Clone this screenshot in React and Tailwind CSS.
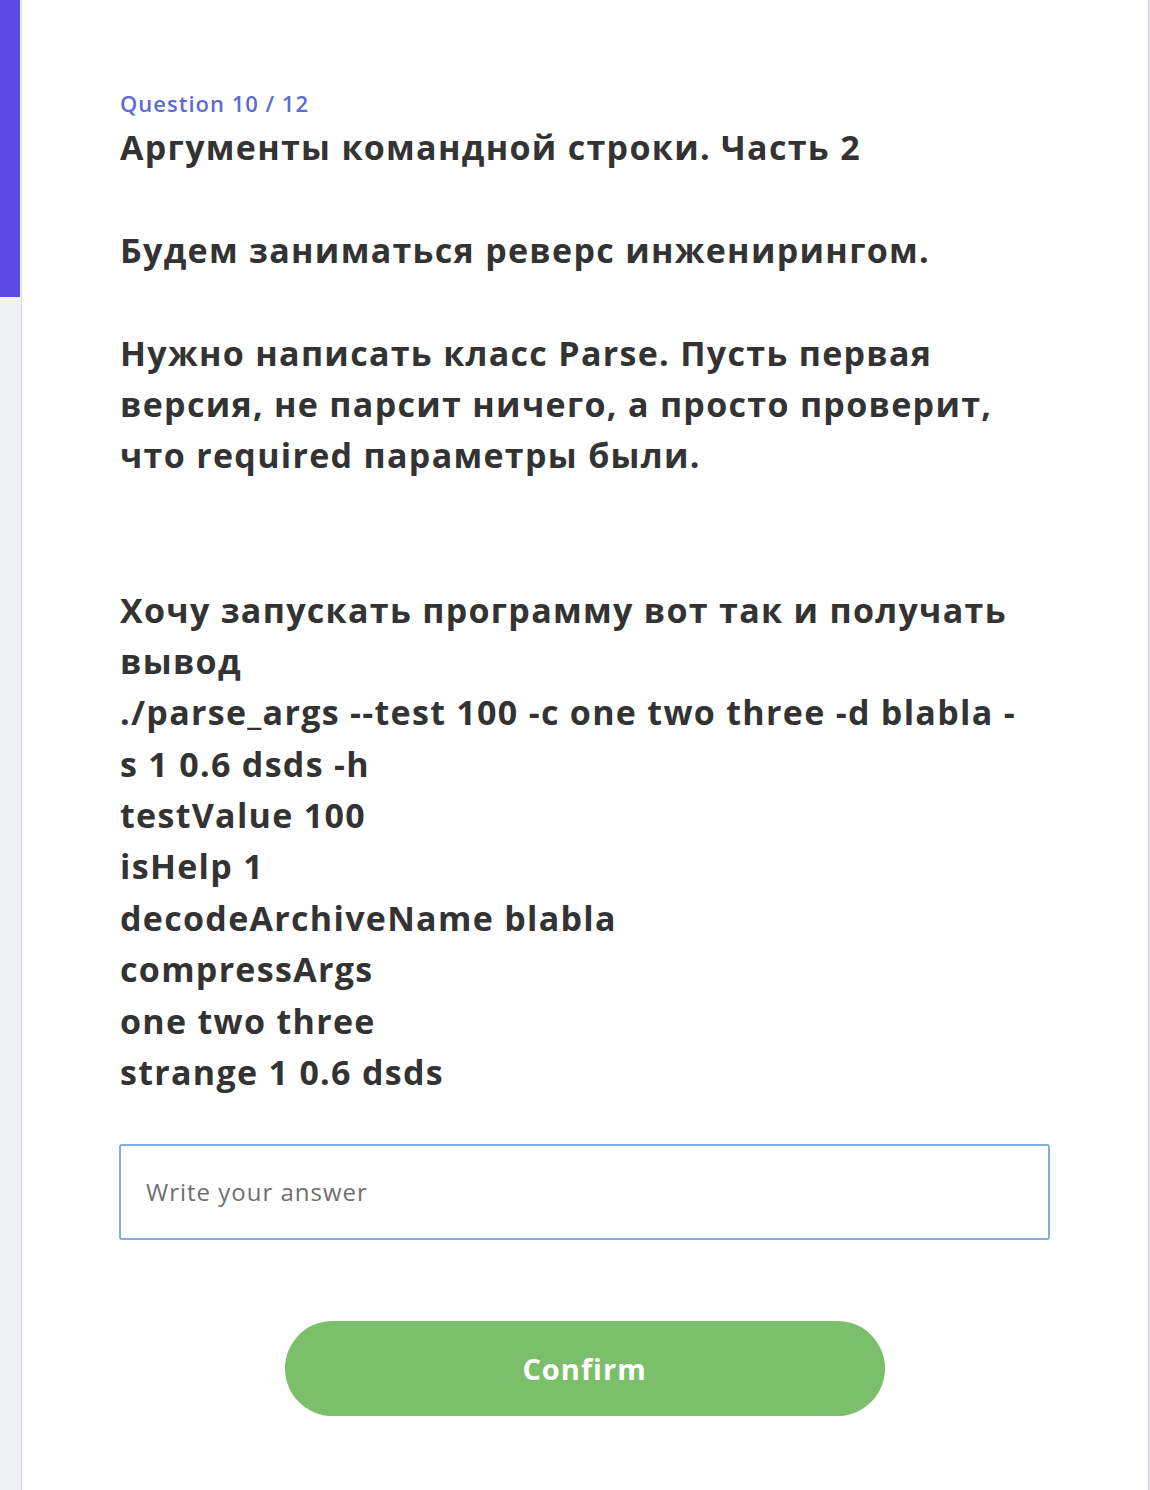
import React from 'react'

const lines = [
  'Аргументы командной строки. Часть 2',
  '',
  'Будем заниматься реверс инженирингом.',
  '',
  'Нужно написать класс Parse. Пусть первая',
  'версия, не парсит ничего, а просто проверит,',
  'что required параметры были.',
  '',
  '',
  'Хочу запускать программу вот так и получать',
  'вывод',
  './parse_args --test 100 -c one two three -d blabla -',
  's 1 0.6 dsds -h',
  'testValue 100',
  'isHelp 1',
  'decodeArchiveName blabla',
  'compressArgs',
  'one two three',
  'strange 1 0.6 dsds',
]

export default function App() {
  return (
    <div
      className="flex min-h-[1490px] w-full bg-white"
      style={{ fontFamily: '"Open Sans", "Noto Sans", sans-serif' }}
    >
      {/* left progress rail */}
      <div className="flex w-[22px] shrink-0 bg-[#f0f1f4]">
        <div className="w-[21px]">
          <div className="h-[297px] w-[20px] bg-[#5b4ae2]" />
        </div>
        <div className="w-[1px] bg-[#dcdce2]" />
      </div>

      <main className="flex-1 bg-white pl-[97px] pr-[98px] pt-[88px]">
        <div className="pl-[1px] text-[22px] leading-[30px] font-semibold tracking-[1px] text-[#5c6bd6]">Question 10 / 12</div>

        <div className="mt-[4px] pl-[1px] text-[34px] leading-[51.4px] font-bold tracking-[1.3px] text-[#333333] whitespace-pre">
          {lines.map((l, i) => (
            <div key={i} className="h-[51.4px]">{l}</div>
          ))}
        </div>

        <div className="mt-[46px] flex h-[96px] w-[931px] items-center rounded-[3px] border-2 border-[#80ade4] px-[25px]">
          <span className="text-[24px] tracking-[1px] text-[#6f6f6f]">Write your answer</span>
        </div>

        <div className="mt-[81px] flex w-[931px] justify-center">
          <button
            type="button"
            className="flex h-[95px] w-[600px] items-center justify-center rounded-full bg-[#7bbf6a] text-[29px] font-bold tracking-[1px] text-white"
          >
            Confirm
          </button>
        </div>
      </main>

      {/* right scroll rail */}
      <div className="flex w-[3px] shrink-0">
        <div className="w-[2px] bg-[#dcdce2]" />
        <div className="w-[1px] bg-[#f0f1f4]">
          <div className="h-[297px] bg-[#5b4ae2]" />
        </div>
      </div>
    </div>
  )
}
